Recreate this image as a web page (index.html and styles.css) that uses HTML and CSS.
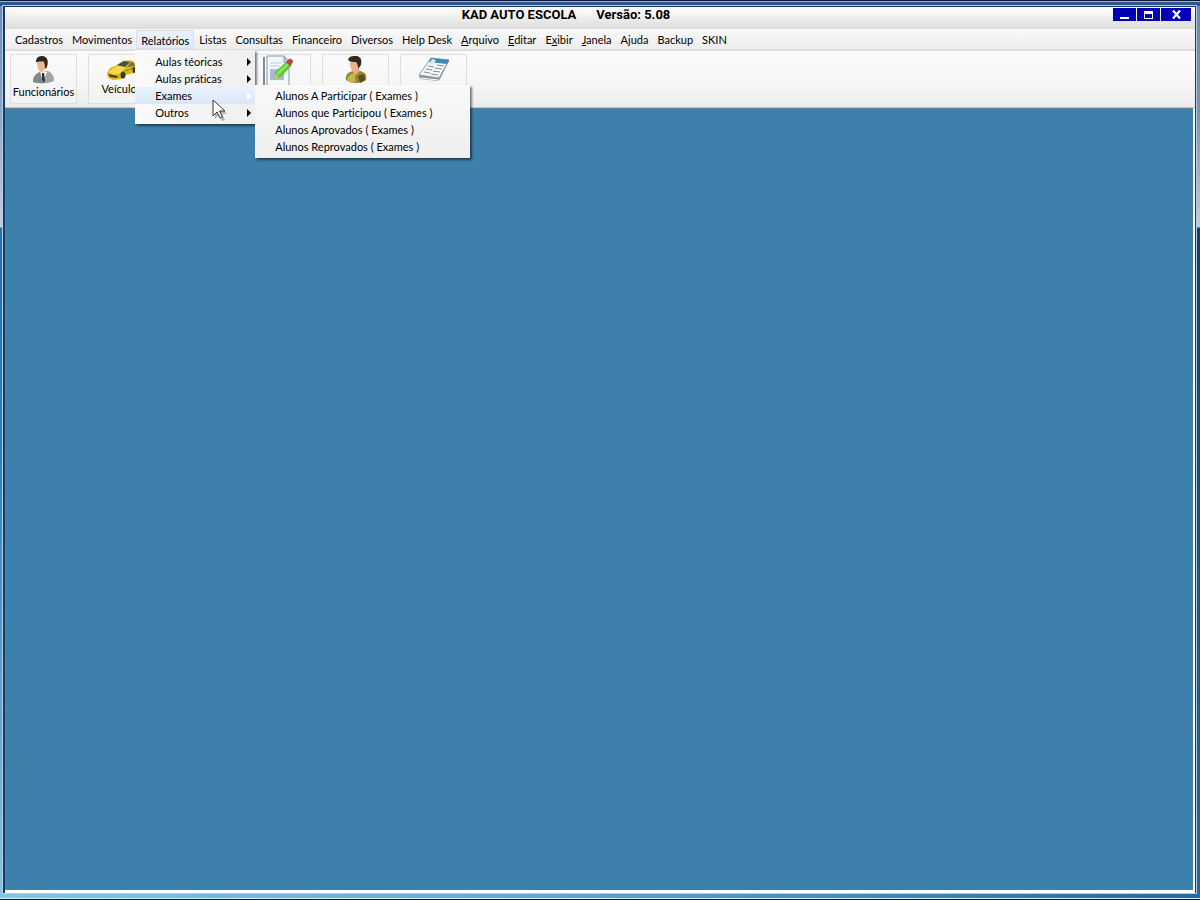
FILE: index.html
```html
<!DOCTYPE html>
<html lang="pt-BR">
<head>
  <meta charset="UTF-8">
  <meta name="viewport" content="width=device-width, initial-scale=1.0">
  <title>KAD AUTO ESCOLA</title>
  <link rel="stylesheet" href="styles.css">
</head>
<body>
  <div class="frame">
    <div class="window">
      <header class="titlebar">
        <h1 class="title"><span>KAD AUTO ESCOLA</span><span>Versão: 5.08</span></h1>
        <div class="window-buttons">
          <button type="button" class="window-button" aria-label="Minimizar">
            <svg width="11" height="11" viewBox="0 0 11 11"><path d="M1 8h9v2H1z" fill="#fff"/></svg>
          </button>
          <button type="button" class="window-button" aria-label="Maximizar">
            <svg width="11" height="11" viewBox="0 0 11 11"><path d="M1 2h9v8H1zM2 5v4h7V5z" fill="#fff" fill-rule="evenodd"/></svg>
          </button>
          <button type="button" class="window-button close" aria-label="Fechar">
            <svg width="11" height="11" viewBox="0 0 11 11"><path d="M2 1.5l7 8M9 1.5l-7 8" stroke="#fff" stroke-width="2.2"/></svg>
          </button>
        </div>
      </header>

      <nav class="menubar">
        <button type="button" class="menu-button">Cadastros</button>
        <button type="button" class="menu-button">Movimentos</button>
        <div class="menu">
          <button type="button" class="menu-button open">Relatórios</button>
          <ul class="dropdown">
            <li><button type="button" class="item has-sub">Aulas téoricas</button></li>
            <li><button type="button" class="item has-sub">Aulas práticas</button></li>
            <li class="menu">
              <button type="button" class="item has-sub selected">Exames</button>
              <ul class="dropdown submenu">
                <li><button type="button" class="item">Alunos A Participar ( Exames )</button></li>
                <li><button type="button" class="item">Alunos que Participou ( Exames )</button></li>
                <li><button type="button" class="item">Alunos Aprovados ( Exames )</button></li>
                <li><button type="button" class="item">Alunos Reprovados ( Exames )</button></li>
              </ul>
            </li>
            <li><button type="button" class="item has-sub">Outros</button></li>
          </ul>
          <svg class="cursor" width="16" height="22" viewBox="0 0 16 22">
            <path d="M3 3v17l4-4 3 6 3-1-3-6h5z" fill="#000" opacity=".25"/>
            <path d="M1 1v16l4-4 3 6 2.500-1-3-6H13z" fill="#fff" stroke="#333" stroke-width="1"/>
          </svg>
        </div>
        <button type="button" class="menu-button">Listas</button>
        <button type="button" class="menu-button">Consultas</button>
        <button type="button" class="menu-button">Financeiro</button>
        <button type="button" class="menu-button">Diversos</button>
        <button type="button" class="menu-button">Help Desk</button>
        <button type="button" class="menu-button"><u>A</u>rquivo</button>
        <button type="button" class="menu-button"><u>E</u>ditar</button>
        <button type="button" class="menu-button">E<u>x</u>ibir</button>
        <button type="button" class="menu-button"><u>J</u>anela</button>
        <button type="button" class="menu-button">Ajuda</button>
        <button type="button" class="menu-button">Backup</button>
        <button type="button" class="menu-button">SKIN</button>
      </nav>

      <div class="toolbar">
        <button type="button" class="tool">
          <svg width="32" height="29" viewBox="0 0 32 29">
            <path d="M5 27c0-5 2-8 7-10l8-1c4 2 6 5 6 10-5 3-16 3-21 1z" fill="#a2a5a8"/>
            <path d="M5 27c0-5 2-8 7-10l3 11c-4 0-8 0-10-1z" fill="#85898e"/>
            <path d="M12 16l3 11 4-10z" fill="#f3f3f3"/>
            <path d="M14 18h2l1 7-1 3-2-3z" fill="#30343a"/>
            <path d="M9 7c0-4 2-5 5-5s5 3 4 8-3 7-5 7-4-4-4-10z" fill="#edb78f"/>
            <path d="M8 7c0-5 3-6 7-6 4 1 6 4 4 11l-2 2c0-3 0-6-2-8-2 1-4 0-5 1z" fill="#30251e"/>
          </svg>
          <span>Funcionários</span>
        </button>
        <button type="button" class="tool">
          <svg width="32" height="26" viewBox="0 0 32 26">
            <path d="M1 18l3-5 7-3 6-4c5-1 9-1 11 1l2 6-2 5-8 2-4 4-9 1-5-2z" fill="#dfb51d"/>
            <path d="M2 17l9-6 9 1-5 6-6 2z" fill="#f6da48"/>
            <path d="M11 10l7-4 6 1-5 5z" fill="#465052"/>
            <path d="M21 12l4-5 3 1 1 3z" fill="#687063"/>
            <path d="M2 19l10 2-1 2-7-1z" fill="#4c4519"/>
            <ellipse cx="17" cy="20" rx="2.500" ry="3.500" fill="#38381f"/>
            <ellipse cx="28" cy="15" rx="1.500" ry="3" fill="#38381f"/>
            <path d="M19 16l8-3" stroke="#987c11"/>
          </svg>
          <span>Veículos</span>
        </button>
        <button type="button" class="tool" aria-label="Alunos"></button>
        <button type="button" class="tool" aria-label="Exames">
          <svg width="32" height="32" viewBox="0 0 32 32">
            <path d="M1 2h2v29H1z" fill="#858a91"/>
            <path d="M5 1h17l5 6v25H5z" fill="#f2f7fc" stroke="#8299b2"/>
            <path d="M22 1v6h5z" fill="#cbd8e8" stroke="#8299b2"/>
            <path d="M8 8h12M8 11h10" stroke="#bdcce0"/>
            <path d="M8 14h14v11H8z" fill="#a6bbdd"/>
            <path d="M13 17L25 6l5 4-11 12-7 2z" fill="#5ac43b"/>
            <path d="M14 18L26 7l2 2-12 12z" fill="#8be05f"/>
            <path d="M24 7l3-3c2-1 4 1 4 3l-3 4z" fill="#bf4436"/>
            <path d="M12 24l1-5 4 3z" fill="#e7bd76"/>
          </svg>
        </button>
        <button type="button" class="tool" aria-label="Alunos">
          <svg width="32" height="29" viewBox="0 0 32 29">
            <path d="M6 25c-1-5 2-8 7-9l7 0c5 1 7 4 6 9-4 4-15 4-20 0z" fill="#94862c"/>
            <path d="M7 25c1-4 3-6 7-7l2 8-5 2z" fill="#c5b64b"/>
            <path d="M12 15l3 6 5-5-2-4h-5z" fill="#e7a77b"/>
            <path d="M10 7c0-4 2-5 5-5s5 3 4 8-3 7-5 7-4-4-4-10z" fill="#edb188"/>
            <path d="M8 5c1-4 4-4 9-4 4 1 5 4 4 9l-3 4c0-3 0-5-2-7-2 0-6 0-8-2z" fill="#30291e"/>
            <path d="M18 21l6-2 1 6-5 3z" fill="#544e21"/>
          </svg>
        </button>
        <button type="button" class="tool" aria-label="Listas">
          <svg width="32" height="29" viewBox="0 0 32 29">
            <path d="M1 21L13 4l18 2-9 18-2 2-18-2z" fill="#8d949b"/>
            <path d="M1 20L13 3l18 2-10 18z" fill="#f6f8fa" stroke="#929ba3"/>
            <path d="M13 3l18 2-2 4-18-2z" fill="#3989b5"/>
            <path d="M14 4l4 1-3 5-4-1z" fill="#dbe8ef"/>
            <path d="M10 11l6 1M8 14l6 1M6 17l6 1M19 10l7 1M17 13l7 1M15 16l7 1M13 19l7 1" stroke="#7d8b99"/>
            <path d="M2 23l18 2" stroke="#fff"/>
          </svg>
        </button>
      </div>

      <main class="workspace"></main>
    </div>
  </div>
</body>
</html>
```
FILE: styles.css
```css
* {
  box-sizing: border-box;
}
body {
  margin: 0;
  font-family: Lato, "Liberation Sans", sans-serif;
  font-size: 11px;
  font-variant-ligatures: none;
  line-height: 17px;
  color: #000;
}
button {
  padding: 0;
  border: none;
  background: none;
  font: inherit;
  font-variant-ligatures: none;
  color: inherit;
}
ul {
  list-style: none;
  margin: 0;
  padding: 0;
}

/* Outer frame */
.frame {
  display: flex;
  min-height: 100vh;
  padding: 5px 4px 6px 3px;
  border-top: 1px solid #071b38;
  border-bottom: 1px solid #071b38;
  background:
    linear-gradient(#93b4dc, #93b4dc) top / 100% 1px no-repeat,
    linear-gradient(#2b5687, #2b5687) top / 100% 5px no-repeat,
    linear-gradient(#d9eef8, #d9eef8) bottom / 100% 1px no-repeat,
    linear-gradient(90deg, #83c5e3, #5fa9d3 45%, #2467a5) bottom / 100% 7px no-repeat,
    linear-gradient(#7087b5, #8da5cb 110px, #c3cfe0 226px, #226fac 227px, #2e82b9 50%, #83c5e3) left / 5px 100% no-repeat,
    linear-gradient(#7188ac, #7c91b5 110px, #c1cbdc 226px, #123f7b 227px, #174885 50%, #2467a5) right / 5px 100% no-repeat;
}
.window {
  flex: 1;
  display: flex;
  flex-direction: column;
  border: solid #173b68;
  border-width: 1px 1px 0 2px;
  box-shadow: 0 0 0 1px #b5cde2;
}

/* Title bar */
.titlebar {
  display: flex;
  align-items: flex-start;
  height: 22px;
  padding-right: 4px;
  background: linear-gradient(#fff, #f2f2f2 35%, #dcdcdc);
}
.title {
  flex: 1;
  display: flex;
  justify-content: center;
  gap: 20px;
  margin: 0;
  padding-left: 14px;
  font-family: Roboto, "Liberation Sans", sans-serif;
  font-size: 13px;
  font-weight: bold;
  line-height: 16px;
}
.window-buttons {
  display: flex;
  gap: 1px;
  margin-top: 1px;
}
.window-button {
  display: flex;
  align-items: center;
  justify-content: center;
  width: 23px;
  height: 13px;
  background: #0000b4;
}
.close {
  width: 30px;
}

/* Menus */
.menubar {
  display: flex;
  height: 22px;
  padding: 1px 0 0 5px;
  border-bottom: 2px solid #dedede;
  background: linear-gradient(#f9f9f9, #ededed);
}
.menu {
  position: relative;
}
.menu-button {
  height: 19px;
  padding: 0 4px 0 5px;
  line-height: 19px;
}
.open {
  padding: 2px 4px 0;
  border: 1px solid #d5dfee;
  background: linear-gradient(#eaf1fb, #e0eafa);
  line-height: 16px;
}
.dropdown {
  position: absolute;
  z-index: 1;
  top: 20px;
  left: -1px;
  width: 120px;
  padding: 3px 0;
  background: linear-gradient(90deg, #fafafa, #efefef);
  box-shadow: 2px 2px 2px rgba(0, 0, 0, 0.5);
}
.submenu {
  top: -2px;
  left: 100%;
  width: 215px;
  padding: 2px 0 3px;
  background: linear-gradient(#fafafa, #eeeeee);
}
.item {
  display: flex;
  align-items: center;
  justify-content: space-between;
  width: 100%;
  height: 17px;
  padding: 0 4px 0 20px;
  white-space: nowrap;
}
.has-sub::after {
  content: "";
  border: 4px solid transparent;
  border-left: 4px solid #000;
  border-right: none;
}
.selected {
  background: linear-gradient(#e9f1fc, #dbe7fa);
}
.selected::after {
  border-left-color: #fff;
}
.cursor {
  position: absolute;
  z-index: 2;
  top: 69px;
  left: 76px;
}

/* Toolbar */
.toolbar {
  display: flex;
  gap: 11px;
  height: 57px;
  padding: 3px 5px;
  border-bottom: 1px solid #c5c5c5;
  background: linear-gradient(#fbfbfb, #f7f7f7 50%, #ececec);
}
.tool {
  display: flex;
  flex-direction: column;
  align-items: center;
  width: 67px;
  height: 50px;
  border: 1px solid #dedede;
  background: linear-gradient(#fbfbfb, #f2f2f2);
  line-height: 15px;
  white-space: nowrap;
}
.tool svg {
  flex-shrink: 0;
}

.workspace {
  flex: 1;
  border: solid #fff;
  border-width: 0 2px 3px 0;
  background: #3d80ab;
  box-shadow: inset 1px 1px #5d7f96;
}
```
